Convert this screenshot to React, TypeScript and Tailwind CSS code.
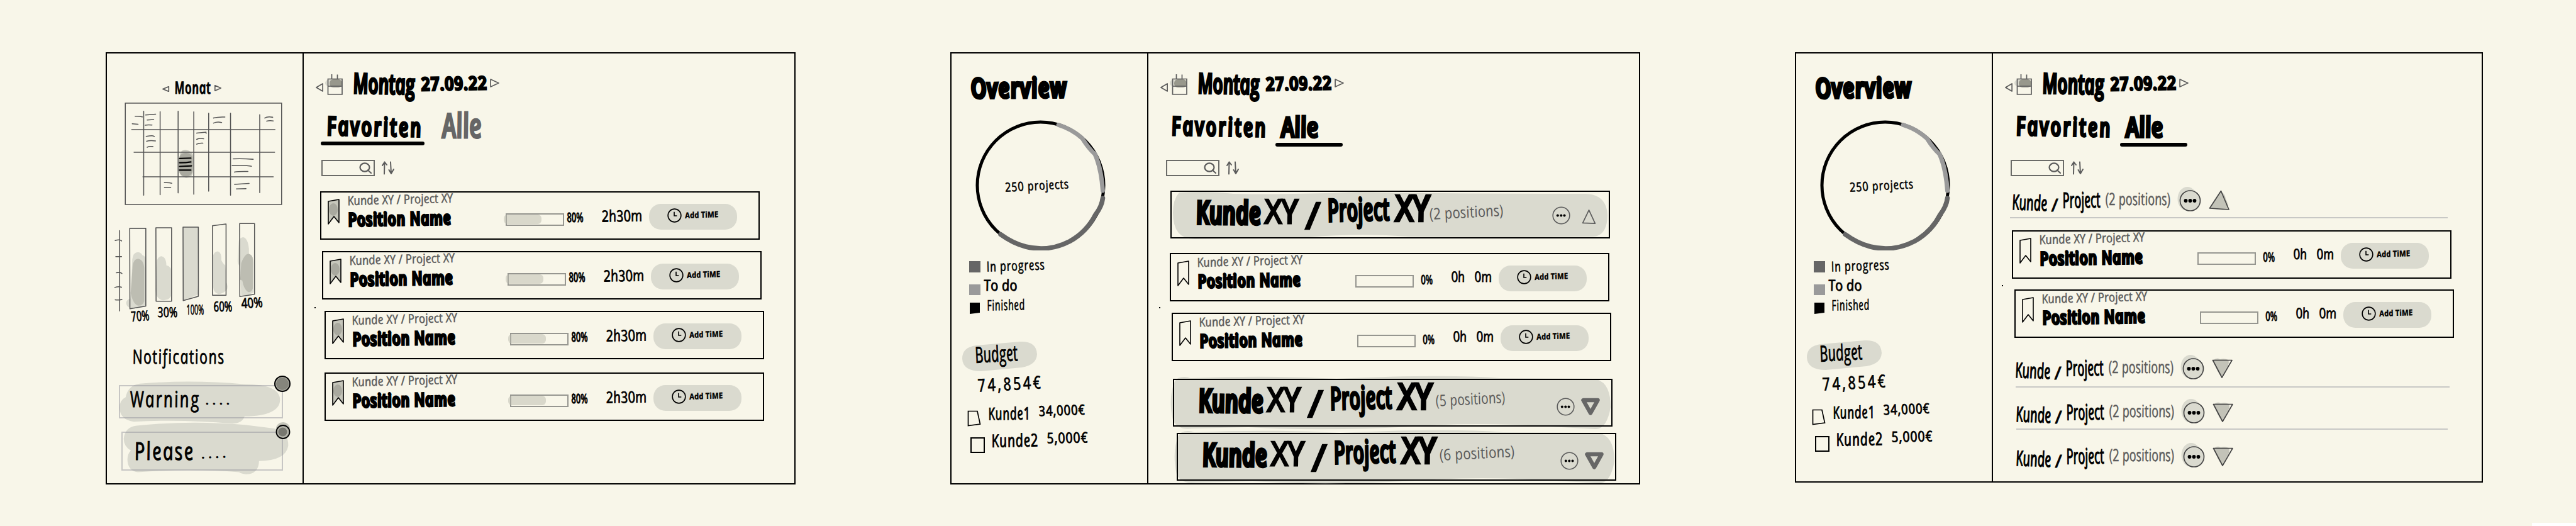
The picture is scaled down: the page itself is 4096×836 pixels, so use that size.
import { useLayoutEffect, useRef } from "react";

type InkProps = { children: string; className: string };

// Lettering stretched or squeezed to the width of its box, with the italic slant taken out.
function Ink({ children, className }: InkProps) {
  const box = useRef<HTMLSpanElement>(null);
  const run = useRef<HTMLSpanElement>(null);
  useLayoutEffect(() => {
    if (!box.current || !run.current) return;
    const s = (box.current.clientWidth + 1) / run.current.offsetWidth;
    run.current.style.transform = `translateX(-1px) scaleX(${s}) skewX(11deg)`;
  });
  return (
    <span ref={box} className={`block shrink-0 whitespace-nowrap leading-none italic ${className}`}>
      <span ref={run} className="inline-block origin-left">{children}</span>
    </span>
  );
}

const G = "#5c5c5c";

function Tri({ dir, className }: { dir: "left" | "right" | "up" | "down"; className: string }) {
  const d = {
    left: "M1 7 L12 1 L12 13 Z",
    right: "M1 1 L13 7 L1 13 Z",
    up: "M7 1 L13 13 L1 12.5 Z",
    down: "M1 1 L13 1 L7.5 13 Z",
  }[dir];
  return (
    <svg viewBox="0 0 14 14" preserveAspectRatio="none" className={`shrink-0 ${className}`} fill="none" stroke={G} strokeWidth="1.7" strokeLinejoin="round">
      <path d={d} vectorEffect="non-scaling-stroke" />
    </svg>
  );
}

function Header() {
  return (
    <div className="mt-[20px] flex h-[55px] items-start pl-[19px]">
      <Tri dir="left" className="mt-[27px] h-[14px] w-[13px]" />
      <svg viewBox="0 0 28 34" className="ml-[2px] mt-[12px] h-[34px] w-[28px] shrink-0" fill="none" stroke={G} strokeWidth="1.7">
        <ellipse cx="12" cy="15" rx="12" ry="7" fill="#dadacf" stroke="none" />
        <rect x="7" y="9" width="20" height="13" rx="6" fill="#98988c" stroke="none" />
        <path d="M4.5 8.5 H27 V33 H4.5 Z M4.5 20 H27 M10.500 1 V8 M19.500 1.500 V8" />
      </svg>
      <Ink className="ml-[17px] mt-[5px] w-[97px] rotate-1 text-[44px] font-semibold [-webkit-text-stroke:3.5px_currentColor]">Montag</Ink>
      <Ink className="ml-[11px] mt-[12px] w-[104px] -rotate-1 text-[29px] font-semibold tracking-[1px] [-webkit-text-stroke:3px_currentColor]">27.09.22</Ink>
      <Tri dir="right" className="ml-[5px] mt-[20px] h-[14px] w-[15px]" />
    </div>
  );
}

function Tabs({ active }: { active: "fav" | "all" }) {
  return (
    <div className="mt-[12px] flex h-[60px] items-start pl-[27px]">
      <div className="w-[165px] shrink-0">
        <Ink className="ml-[10px] mt-[8px] w-[152px] rotate-1 text-[41px] font-semibold tracking-[4px] [-webkit-text-stroke:3.5px_currentColor]">Favoriten</Ink>
        {active === "fav" && <div className="mt-[4px] h-[6px] rounded-full bg-black" />}
      </div>
      {active === "fav" ? (
        <Ink className="ml-[28px] -mt-px w-[62px] text-[54px] font-semibold text-[#666666] [-webkit-text-stroke:3px_currentColor]">Alle</Ink>
      ) : (
        <div className="ml-[10px] w-[107px]">
          <Ink className="ml-[9px] mt-[7px] w-[59px] text-[44px] font-semibold [-webkit-text-stroke:4px_currentColor]">Alle</Ink>
          <div className="mt-[4px] h-[6px] rounded-full bg-black" />
        </div>
      )}
    </div>
  );
}

function Search() {
  return (
    <div className="mt-[22px] flex h-[26px] items-start pl-[28px]">
      <div className="flex h-[26px] w-[85px] items-center justify-end border-2 border-[#6b6b68] pr-[3px]">
        <svg viewBox="0 0 20 18" className="h-[18px] w-[20px]" fill="none" stroke={G} strokeWidth="2.2" strokeLinecap="round">
          <ellipse cx="9" cy="8" rx="7.500" ry="6.600" />
          <path d="M14 12.500 L19 17" />
        </svg>
      </div>
      <svg viewBox="0 0 20 22" className="ml-[11px] mt-[2px] h-[22px] w-[20px]" fill="none" stroke={G} strokeWidth="2" strokeLinecap="round" strokeLinejoin="round">
        <path d="M4 20.500 L4.500 1.500 M1 7 L4.500 1.500 L8 6 M14 1.500 L15 20 M11.500 14 L15 20 L19 13" />
      </svg>
    </div>
  );
}

function Card({ className, saved = false }: { className: string; saved?: boolean }) {
  return (
    <div className={`flex w-[699px] shrink-0 items-start border-2 border-black ${className}`}>
      <svg viewBox="0 0 19 41" className="ml-[10px] mt-[10px] h-[41px] w-[19px] shrink-0">
        {saved && (
          <>
            <path d="M1 4 L18 1 V38 L10 28 L1 38 Z" fill="#c6c6bb" />
            <ellipse cx="9" cy="17" rx="7" ry="10" fill="#a9a99f" />
          </>
        )}
        <path d="M1 4 L18 1 V38 L10 28 L1 40 Z" fill="none" stroke="black" strokeWidth="1.6" strokeLinejoin="round" />
      </svg>
      <div className="ml-[13px] w-[168px] shrink-0">
        <Ink className="mt-px w-[167px] rotate-[-1.500deg] text-[20px] text-[#5c5c5c] [-webkit-text-stroke:0.5px_currentColor]">Kunde XY / Project XY</Ink>
        <Ink className="mt-[5px] ml-px w-[163px] -rotate-1 text-[29px] font-semibold tracking-[1px] [-webkit-text-stroke:3.5px_currentColor]">Position Name</Ink>
      </div>
      <div className="relative ml-[83px] mt-[33px] h-[20px] w-[93px] shrink-0 border-2 border-[#969690]">
        {saved && <div className="absolute -left-[5px] top-0 h-[15px] w-[60px] rounded-[6px] bg-[#b9b9ae]/50" />}
      </div>
      {saved ? (
        <>
          <Ink className="ml-[5px] mt-[29px] w-[25px] text-[21px] font-semibold [-webkit-text-stroke:0.8px_currentColor]">80%</Ink>
          <Ink className="ml-[30px] mt-[24px] w-[64px] -rotate-1 text-[25px] [-webkit-text-stroke:0.8px_currentColor]">2h30m</Ink>
        </>
      ) : (
        <>
          <Ink className="ml-[12px] mt-[30px] w-[18px] text-[21px] font-semibold [-webkit-text-stroke:0.6px_currentColor]">0%</Ink>
          <Ink className="ml-[30px] mt-[24px] w-[64px] text-[23px] [word-spacing:12px] [-webkit-text-stroke:0.8px_currentColor]">0h 0m</Ink>
        </>
      )}
      <div className="ml-[11px] mt-[18px] flex h-[41px] w-[140px] shrink-0 items-start rounded-[19px] bg-[#dadacf] pl-[29px]">
        <svg viewBox="0 0 24 24" className="mt-[7px] h-[23px] w-[23px]" fill="none" stroke="black" strokeWidth="1.7">
          <circle cx="12" cy="12" r="10.800" />
          <path d="M11.500 6 V12.500 H16" />
        </svg>
        <Ink className="ml-[6px] mt-[11px] w-[52px] -rotate-2 text-[13px] font-bold [-webkit-text-stroke:0.3px_currentColor]">Add TiME</Ink>
      </div>
    </div>
  );
}

function Group({ count, open = false, className, tail }: { count: string; open?: boolean; className: string; tail: string }) {
  return (
    <div className={`relative h-[76px] w-[699px] shrink-0 ${className}`}>
      <svg viewBox="0 0 699 76" className="absolute inset-0 h-[76px] w-[699px] overflow-visible">
        {open ? (
          <path d="M14 3 Q60 0 100 5 Q200 7 300 2 Q420 5 660 5 Q694 6 695 40 Q694 72 672 73 Q520 75 380 73 Q300 67 220 74 L40 77 Q4 78 4 35 Q4 14 14 3 Z" fill="#dadacf" />
        ) : (
          <path d="M8 -1 Q18 -5 28 -1 Q150 -6 260 0 Q430 -8 520 -1 L670 0 Q696 4 696 45 Q690 80 672 80 L600 76 Q480 68 380 76 Q240 84 120 77 L30 79 Q8 82 0 66 Q-8 30 3 4 Z" fill="#dadacf" />
        )}
      </svg>
      <div className="relative flex h-[76px] items-start border-2 border-black">
        <Ink className="ml-[39px] mt-[7px] w-[102px] rotate-[0.500deg] text-[50px] font-semibold [-webkit-text-stroke:5px_currentColor]">Kunde</Ink>
        <Ink className="ml-[7px] mt-[3px] w-[52px] text-[53px] [-webkit-text-stroke:3px_currentColor]">XY</Ink>
        <Ink className="ml-[12px] mt-[7px] w-[23px] text-[59px] [-webkit-text-stroke:2.5px_currentColor]">/</Ink>
        <Ink className="ml-[13px] mt-[2px] w-[98px] rotate-[-1.500deg] text-[50px] font-semibold [-webkit-text-stroke:3.5px_currentColor]">Project</Ink>
        <Ink className="ml-[10px] -mt-[4px] w-[53px] text-[56px] [-webkit-text-stroke:4.5px_currentColor]">XY</Ink>
        <Ink className={`-rotate-3 text-[25px] text-[#5c5c5c] ${count === "2" ? "ml-px mt-[19px]" : "ml-[7px] mt-[17px]"} ${tail}`}>{`(${count} positions)`}</Ink>
        <div className="ml-auto flex items-start">
          <svg viewBox="0 0 29 29" className={`h-[29px] w-[29px] ${open ? "mr-[18px] mt-[23px]" : "mr-[9px] mt-[28px]"}`}>
            <circle cx="14.500" cy="14.500" r="13.300" fill="none" stroke={G} strokeWidth="1.600" />
            <circle cx="8.800" cy="14.500" r="2" />
            <circle cx="14.300" cy="14.500" r="2" />
            <circle cx="19.500" cy="14.500" r="2" />
          </svg>
          {open ? (
            <Tri dir="up" className="mr-[20px] mt-[27px] h-[25px] w-[23px]" />
          ) : (
            <svg viewBox="0 0 32 29" className="mr-[17px] mt-[28px] h-[29px] w-[32px]" fill="none" stroke="#666666" strokeWidth="6.500" strokeLinejoin="round">
              <path d="M4.500 4 L27.500 4 L16 24.500 Z" />
            </svg>
          )}
        </div>
      </div>
    </div>
  );
}

function Line({ className, open = false }: { className: string; open?: boolean }) {
  return (
    <div className={`flex shrink-0 items-start border-[#c8c8c5] ${className}`}>
      <Ink className="mt-[8px] w-[55px] rotate-2 text-[33px] [-webkit-text-stroke:1.4px_currentColor]">Kunde</Ink>
      <Ink className="ml-[7px] mt-[14px] w-[10px] text-[28px] [-webkit-text-stroke:0.8px_currentColor]">/</Ink>
      <Ink className="ml-[8px] mt-[3px] w-[59px] -rotate-1 text-[34px] [-webkit-text-stroke:1.4px_currentColor]">Project</Ink>
      <Ink className="ml-[9px] mt-[5px] w-[103px] text-[27px] text-[#5c5c5c] [-webkit-text-stroke:0.5px_currentColor]">(2 positions)</Ink>
      <svg viewBox="0 0 38 40" className="ml-[11px] h-[40px] w-[38px] shrink-0">
        <ellipse cx="16" cy="19" rx="15.500" ry="19" fill="#dadacf" />
        <circle cx="20.500" cy="22" r="16" fill="#dadacf" stroke="#444444" strokeWidth="1.700" />
        <circle cx="13.500" cy="22" r="2.900" />
        <circle cx="20.500" cy="22" r="2.900" />
        <circle cx="27.500" cy="22" r="2.900" />
      </svg>
      <svg viewBox="0 0 33 32" className="ml-[12px] mt-[5px] h-[32px] w-[33px] shrink-0" strokeLinejoin="round">
        {open ? (
          <>
            <path d="M19 4 Q25 3 27 14 Q33 26 29 31 L22 32 Q8 30 3 28 Q10 16 19 4 Z" fill="#c3c3b8" />
            <path d="M19.500 1.500 L32 31 L1.500 29 Z" fill="none" stroke="#444444" strokeWidth="1.700" />
          </>
        ) : (
          <>
            <path d="M3 3 Q8 -1 13 2 Q20 0 26 3 Q29 9 22 18 Q17 29 15 29 Q8 22 3 6 Z" fill="#c3c3b8" />
            <path d="M1.500 3.500 L32 3.500 L16 31 Z" fill="none" stroke="#444444" strokeWidth="1.700" />
          </>
        )}
      </svg>
    </div>
  );
}

function MonthSidebar() {
  return (
    <>
      <div className="mt-[40px] flex h-[30px] items-start pl-[88px]">
        <Tri dir="left" className="mt-[12px] h-[9px] w-[12px]" />
        <Ink className="ml-[8px] w-[57px] text-[27px] font-semibold tracking-[1px] [-webkit-text-stroke:1px_currentColor]">Monat</Ink>
        <Tri dir="right" className="ml-[6px] mt-[10px] h-[10px] w-[11px]" />
      </div>
      <svg viewBox="163 315 814 530" className="ml-[28px] mt-[8px] h-[163px] w-[251px] shrink-0" fill="none" stroke="#555555" strokeWidth="5" strokeLinecap="round">
        <rect x="166" y="318" width="808" height="524" />
        <path d="M448 600 Q445 562 475 560 Q518 565 518 600 L516 670 Q515 704 480 704 Q446 700 446 660 Z" fill="#c6c6bb" stroke="none" />
        <rect x="444" y="575" width="70" height="122" rx="32" fill="#a9a99f" stroke="none" />
        <path d="M261 360 V794 M346 362 V791 M439 360 V782 M520 363 V789 M597 370 V773 M710 370 V794 M861 378 V781 M199 455 H940 M211 572 H938 M257 699 H931" />
        <path d="M217 386 Q235 384 254 389 M202 425 L232 427 M271 379 L323 375 M279 405 L313 403 M269 432 Q280 429 304 431 M274 490 Q300 485 310 487 L316 491 M276 515 Q290 510 322 513 M279 546 Q288 540 309 543 M622 395 Q650 388 681 390 M622 421 Q640 413 664 418 M887 395 Q900 386 928 391 M897 411 Q912 407 931 410 M535 473 L583 468 L584 474 M535 505 Q550 498 571 502 M535 530 Q548 523 567 525 M724 606 Q770 604 827 608 M718 641 Q790 638 818 644 M730 674 Q750 670 800 671 M731 738 L806 733 M740 761 L790 760 M368 729 Q390 727 406 732 M368 754 L401 753" />
        <path d="M447 604 L505 602 M447 626 Q480 626 505 622 M447 645 L508 642 M446 664 H505" stroke="black" strokeWidth="7" />
      </svg>
      <svg viewBox="105 30 795 470" className="ml-[11px] mt-[26px] h-[145px] w-[245px] shrink-0" fill="none" stroke="#555555" strokeWidth="5" strokeLinecap="round">
        <g fill="#dadacf" stroke="none">
          <path d="M200 225 Q205 188 230 188 Q245 190 252 203 Q270 208 270 230 V468 Q230 480 190 476 Q166 466 169 446 Q175 430 190 428 Q198 300 200 225 Z" />
          <path d="M328 230 Q335 210 350 209 Q375 212 376 256 Q404 260 404 300 V400 Q400 435 360 436 Q322 432 320 380 Z" />
          <path d="M465 60 H541 L536 360 L541 405 L520 415 L465 437 Z" />
          <path d="M617 205 Q625 184 642 184 Q662 190 660 230 Q668 248 680 255 Q686 300 684 340 Q696 365 688 382 Q670 403 645 404 Q620 398 618 370 Z" />
          <path d="M750 130 Q758 112 772 111 Q796 115 802 170 V200 Q825 206 826 240 V395 Q800 412 762 410 L756 260 Q742 250 744 225 Z" />
        </g>
        <g fill="#bdbdb2" stroke="none">
          <path d="M202 260 Q205 224 230 222 Q258 226 262 270 V440 Q256 464 230 464 Q204 456 192 400 Z" />
          <path d="M762 245 Q780 196 800 196 Q822 202 822 225 V375 Q816 395 798 394 Q775 380 768 335 L757 330 Z" />
        </g>
        <path d="M187 65 H270 V466 L188 480 Z M322 62 H403 V441 H323 Z M462 59 H541 V416 L463 438 Z M614 52 L684 43 V410 H614 Z M754 40 H831 V405 L755 417 Z" strokeLinejoin="round" />
        <path d="M135 77 V491 M112 128 Q135 120 145 130 M115 211 H145 M118 294 Q138 289 147 298 M110 370 Q130 363 145 369 M112 434 Q130 436 147 432" />
      </svg>
      <div className="-mt-[27px] flex h-[45px] shrink-0 items-start pl-[39px]">
        <Ink className="mt-[20px] w-[28px] rotate-[-4deg] text-[22px] font-medium [-webkit-text-stroke:0.8px_currentColor]">70%</Ink>
        <Ink className="ml-[14px] mt-[14px] w-[31px] text-[22px] font-medium [-webkit-text-stroke:0.8px_currentColor]">30%</Ink>
        <Ink className="ml-[15px] mt-[10px] w-[27px] text-[22px] font-medium [-webkit-text-stroke:0.6px_currentColor]">100%</Ink>
        <Ink className="ml-[16px] mt-[5px] w-[29px] text-[22px] font-medium [-webkit-text-stroke:0.8px_currentColor]">60%</Ink>
        <Ink className="-mt-px ml-[15px] w-[33px] rotate-[-4deg] text-[22px] font-medium [-webkit-text-stroke:0.8px_currentColor]">40%</Ink>
      </div>
      <Ink className="ml-[41px] mt-[36px] w-[146px] text-[31px] tracking-[2px] [-webkit-text-stroke:0.8px_currentColor]">Notifications</Ink>
      <div className="relative ml-[19px] mt-[30px] h-[53px] w-[261px] shrink-0">
        <svg viewBox="133 874 842 168" preserveAspectRatio="none" className="absolute inset-0 h-[53px] w-[261px] overflow-visible">
          <path d="M168 935 Q180 875 240 867 Q500 845 780 870 Q960 870 960 950 Q955 1030 778 1032 Q765 1068 715 1068 Q450 1045 210 1059 Q140 1050 136 990 Q136 950 168 935 Z" fill="#dadacf" />
        </svg>
        <div className="relative flex h-[53px] items-start border-2 border-[#8c8c96]/45 pl-[16px] pt-[2px]">
          <Ink className="w-[111px] text-[35px] tracking-[3px] [-webkit-text-stroke:0.9px_currentColor]">Warning</Ink>
          <Ink className="ml-[8px] mt-[4px] w-[43px] text-[26px] tracking-[3px]">....</Ink>
        </div>
        <div className="absolute -right-[12px] -top-[15px] h-[26px] w-[26px] rounded-full border-2 border-black bg-[#85857c] shadow-[inset_0_0_0_1px_#b4b4aa]" />
      </div>
      <div className="relative ml-[23px] mt-[21px] h-[62px] w-[257px] shrink-0">
        <svg viewBox="146 1114 829 198" preserveAspectRatio="none" className="absolute inset-0 h-[62px] w-[257px] overflow-visible">
          <path d="M195 1210 Q158 1190 158 1150 Q165 1090 225 1084 Q500 1055 780 1080 L930 1098 Q1002 1110 1002 1185 Q990 1262 852 1263 Q850 1330 785 1330 Q760 1328 750 1320 Q500 1300 230 1320 Q178 1312 177 1255 Q178 1225 195 1210 Z" fill="#dadacf" />
        </svg>
        <div className="relative flex h-[62px] items-start border-2 border-[#8c8c96]/45 pl-[19px] pt-[8px]">
          <Ink className="w-[95px] text-[39px] tracking-[3px] [-webkit-text-stroke:1.2px_currentColor]">Please</Ink>
          <Ink className="ml-[10px] mt-[9px] w-[44px] -rotate-2 text-[26px] tracking-[3px]">....</Ink>
        </div>
        <svg viewBox="0 0 26 30" className="absolute -right-[13px] -top-[16px] h-[30px] w-[26px]">
          <ellipse cx="13" cy="11" rx="11" ry="10" fill="#c6c6bb" />
          <circle cx="13" cy="16.500" r="10.500" fill="#b4b4aa" stroke="black" strokeWidth="1.900" />
          <circle cx="12.500" cy="16.500" r="7" fill="#77776f" />
        </svg>
      </div>
    </>
  );
}

function OverviewSidebar({ short = false }: { short?: boolean }) {
  return (
    <>
      <Ink className="ml-[31px] mt-[32px] w-[152px] rotate-[-0.500deg] text-[43px] font-semibold tracking-[2px] [-webkit-text-stroke:5px_currentColor]">Overview</Ink>
      <div className="ml-[38px] mt-[31px] grid h-[207px] w-[207px] shrink-0">
        <svg viewBox="0 0 207 207" className="col-start-1 row-start-1 h-[207px] w-[207px]" fill="none" strokeLinecap="round">
          <circle cx="103.500" cy="103.500" r="100.500" stroke="black" strokeWidth="5" />
          <path d="M132 7.500 A100.500 100.500 0 0 1 170 29 Q180 45 190 54 Q200 76 202.500 112" stroke="#9a9a9a" strokeWidth="7" />
          <path d="M202.500 124 Q201 137 191 150 A100.500 100.500 0 0 1 150 192.500 A100.500 100.500 0 0 1 80 201 Q60 196 40 181.500" stroke="#666666" strokeWidth="7.500" />
        </svg>
        <Ink className="col-start-1 row-start-1 ml-[50px] mt-[94px] w-[101px] -rotate-3 text-[20px] tracking-[1px] [-webkit-text-stroke:0.6px_currentColor]">250 projects</Ink>
      </div>
      <div className="mt-[11px] flex h-[32px] shrink-0 items-start pl-[28px]">
        <div className="mt-[6px] h-[18px] w-[18px] bg-[#666666]" />
        <Ink className="ml-[10px] mt-px w-[92px] -rotate-2 text-[22px] tracking-[1px] [-webkit-text-stroke:0.6px_currentColor]">In progress</Ink>
      </div>
      <div className="flex h-[32px] shrink-0 items-start pl-[28px]">
        <div className="mt-[11px] h-[17px] w-[18px] bg-[#9a9a9a]" />
        <Ink className="ml-[6px] w-[52px] text-[24px] [-webkit-text-stroke:0.9px_currentColor]">To do</Ink>
      </div>
      <div className="flex h-[30px] shrink-0 items-start pl-[29px]">
        <svg viewBox="0 0 16 18" className="mt-[8px] h-[18px] w-[16px]">
          <path d="M0 0 H16 V16 L0 18 Z" />
        </svg>
        <Ink className="ml-[12px] w-[60px] -rotate-1 text-[23px] tracking-[1px] [-webkit-text-stroke:0.6px_currentColor]">Finished</Ink>
      </div>
      <div className={`ml-[17px] grid h-[48px] w-[119px] shrink-0 ${short ? "mt-[37px]" : "mt-[39px]"}`}>
        <svg viewBox="0 0 119 48" className="col-start-1 row-start-1 h-[48px] w-[119px]">
          <path d="M22 7 L92 1 Q118 0 119 21 Q118 38 95 42 L30 48 Q1 48 0 28 Q0 10 22 7 Z" fill="#dadacf" />
        </svg>
        <Ink className="col-start-1 row-start-1 ml-[21px] mt-[2px] w-[67px] -rotate-3 text-[35px] [-webkit-text-stroke:0.9px_currentColor]">Budget</Ink>
      </div>
      <Ink className="ml-[42px] mt-[5px] w-[102px] -rotate-3 text-[28px] tracking-[4px] [-webkit-text-stroke:0.8px_currentColor]">74,854€</Ink>
      <div className="mt-[16px] flex h-[40px] shrink-0 items-start pl-[25px]">
        <svg viewBox="0 0 22 26" className="mt-[13px] h-[26px] w-[22px]" fill="none" stroke="black" strokeWidth="1.700">
          <path d="M1.500 1.500 H16 L20.500 22 L1.500 24.500 Z" />
        </svg>
        <Ink className="ml-[12px] mt-[4px] w-[66px] -rotate-1 text-[27px] tracking-[1px] [-webkit-text-stroke:1px_currentColor]">Kunde1</Ink>
        <Ink className="ml-[14px] mt-px w-[73px] -rotate-2 text-[22px] tracking-[1px] [-webkit-text-stroke:0.9px_currentColor]">34,000€</Ink>
      </div>
      <div className="mt-[4px] flex h-[40px] shrink-0 items-start pl-[30px]">
        <div className="mt-[12px] h-[25px] w-[23px] border-2 border-black" />
        <Ink className="ml-[11px] mt-[2px] w-[74px] -rotate-1 text-[28px] tracking-[1px] [-webkit-text-stroke:1px_currentColor]">Kunde2</Ink>
        <Ink className="ml-[14px] mt-px w-[65px] -rotate-1 text-[23px] tracking-[1px] [-webkit-text-stroke:0.9px_currentColor]">5,000€</Ink>
      </div>
    </>
  );
}

export default function App() {
  return (
    <div className="relative flex h-[836px] w-[4096px] items-start gap-[246px] overflow-hidden bg-[#f8f6e9] pl-[168px] pt-[83px] font-['Open_Sans','Noto_Sans',sans-serif] text-black">
      <section className="flex h-[687px] w-[1097px] shrink-0 border-2 border-black">
        <aside className="flex w-[313px] shrink-0 flex-col border-r-2 border-black"><MonthSidebar /></aside>
        <main className="relative flex flex-1 flex-col">
          <Header />
          <Tabs active="fav" />
          <Search />
          <Card saved className="ml-[26px] mt-[24px] h-[77px]" />
          <Card saved className="ml-[29px] mt-[18px] h-[77px]" />
          <Card saved className="ml-[33px] mt-[18px] h-[77px]" />
          <Card saved className="ml-[33px] mt-[21px] h-[77px]" />
          <i className="absolute left-[17px] top-[403px] h-[2px] w-[2px] bg-black" />
        </main>
      </section>
      <section className="flex h-[687px] w-[1097px] shrink-0 border-2 border-black">
        <aside className="flex w-[313px] shrink-0 flex-col border-r-2 border-black"><OverviewSidebar /></aside>
        <main className="relative flex flex-1 flex-col">
          <Header />
          <Tabs active="all" />
          <Search />
          <Group count="2" open tail="w-[117px]" className="ml-[35px] mt-[23px]" />
          <Card className="ml-[34px] mt-[23px] h-[77px]" />
          <Card className="ml-[37px] mt-[18px] h-[77px]" />
          <Group count="5" tail="w-[110px]" className="ml-[39px] mt-[28px]" />
          <Group count="6" tail="w-[119px]" className="ml-[45px] mt-[10px]" />
          <i className="absolute left-[17px] top-[403px] h-[2px] w-[2px] bg-black" />
        </main>
      </section>
      <section className="flex h-[684px] w-[1094px] shrink-0 border-2 border-black">
        <aside className="flex w-[313px] shrink-0 flex-col border-r-2 border-black"><OverviewSidebar short /></aside>
        <main className="relative flex flex-1 flex-col">
          <Header />
          <Tabs active="all" />
          <Search />
          <Line open className="ml-[27px] mt-[17px] h-[50px] w-[696px] border-b-2 pl-[4px]" />
          <Card className="ml-[30px] mt-[19px] h-[77px]" />
          <Card className="ml-[34px] mt-[17px] h-[77px]" />
          <Line className="ml-[36px] mt-[27px] h-[52px] w-[690px] border-b-2" />
          <Line className="ml-[37px] mt-[18px] h-[49px] w-[686px] border-b-2" />
          <Line className="ml-[37px] mt-[21px] h-[45px] w-[686px]" />
          <i className="absolute left-[14px] top-[368px] h-[2px] w-[2px] bg-black" />
        </main>
      </section>
      <div className="absolute bottom-0 right-0 h-[5px] w-[70px] bg-white" />
    </div>
  );
}
